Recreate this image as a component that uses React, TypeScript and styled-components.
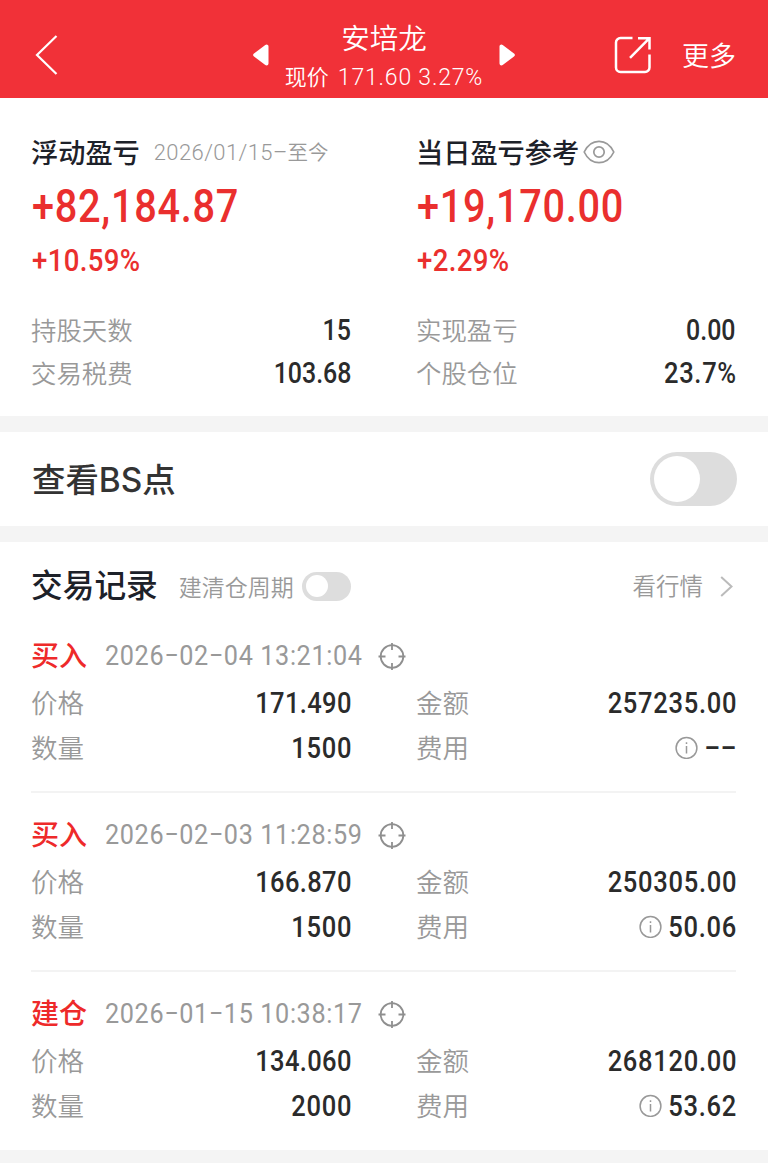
import React from "react";
import styled, { createGlobalStyle } from "styled-components";

const Global = createGlobalStyle`
  * { box-sizing: border-box; }
  body {
    margin: 0;
    background: #fff;
    font-family: Roboto, "Noto Sans CJK SC", sans-serif;
    color: #2b2b2b;
  }
  svg { display: block; flex: none; }
`;

const CJK = `"Noto Sans CJK SC", sans-serif`;

const Page = styled.main`
  width: 768px;
  height: 1163px;
  overflow: hidden;
  display: flex;
  flex-direction: column;
`;

const Header = styled.header`
  height: 98px;
  flex: none;
  background: #f13138;
  color: #fff;
  display: grid;
  grid-template-columns: 1fr 264px 1fr;
  align-items: center;
  padding: 12px 32px 0 34px;
`;

const Switcher = styled.div`
  display: flex;
  align-items: center;
  justify-content: space-between;
  margin: 0 1px 0 -1px;
`;

const StockBlock = styled.div`
  display: flex;
  flex-direction: column;
  align-items: center;
  white-space: nowrap;
`;

const StockName = styled.div`
  padding-top: 1px;
  font: 350 28.5px/38px ${CJK};
`;

const StockPrice = styled.div`
  display: flex;
  gap: 9px;
  font: 350 22px/38px ${CJK};
`;

const Quote = styled.span`
  font: 300 23px/43px Roboto, sans-serif;
  height: 38px;
  letter-spacing: 0.8px;
`;

const Actions = styled.div`
  display: flex;
  align-items: center;
  justify-content: flex-end;
  gap: 31px;
`;

const More = styled.span`
  font: 350 27px/40px ${CJK};
`;

const Summary = styled.section`
  height: 318px;
  flex: none;
  padding: 31px 32px 0 31px;
  display: grid;
  grid-template-columns: 320px 320px;
  justify-content: space-between;
`;

const Column = styled.div`
  display: flex;
  flex-direction: column;
`;

const ColumnTitle = styled.div`
  height: 44px;
  display: flex;
  align-items: center;
  white-space: nowrap;
  font: 500 27.2px/44px ${CJK};
  color: #1d2129;

  svg {
    margin: 2px 0 0 4px;
  }
`;

const Period = styled.span`
  margin-left: 14px;
  display: flex;
  font: 350 20.5px/44px ${CJK};
  color: #999;
`;

const PeriodStart = styled.span`
  height: 44px;
  font: 300 22px/48px Roboto, sans-serif;
  letter-spacing: 0.4px;
`;

const BigNumber = styled.div`
  margin-left: 1px;
  font-size: 47px;
  line-height: 65px;
  font-weight: 500;
  letter-spacing: 0.85px;
  white-space: nowrap;
  color: #ea2f2e;
  transform: scaleX(0.845);
  transform-origin: left;
`;

const Percent = styled.div`
  margin: 0 0 24px 1px;
  font-size: 31px;
  line-height: 46px;
  font-weight: 500;
  letter-spacing: 0.4px;
  color: #ea2f2e;
  transform: scaleX(0.89);
  transform-origin: left;
`;

const Row = styled.div<{ $h: number }>`
  height: ${(p) => p.$h}px;
  display: flex;
  align-items: center;
  justify-content: space-between;
`;

const Label = styled.span<{ $size?: number }>`
  padding-bottom: 2px;
  font: 350 ${(p) => p.$size ?? 25.4}px/40px ${CJK};
  color: #999;
`;

const Value = styled.span<{ $tight?: boolean; $spacing?: number }>`
  display: inline-block;
  font-size: 29px;
  line-height: 40px;
  font-weight: 500;
  letter-spacing: ${(p) => (p.$tight ? 0 : (p.$spacing ?? 0.8))}px;
  margin-right: ${(p) => (p.$tight ? 0 : -0.8)}px;
  transform: scaleX(${(p) => (p.$tight ? 0.86 : 0.88)});
  transform-origin: right;
`;

const Fee = styled.span<{ $w: number }>`
  display: flex;
  align-items: center;
  justify-content: space-between;
  width: ${(p) => p.$w}px;

  ${Value} {
    margin-left: -20px;
  }
`;

const EmptyFee = styled(Value)`
  transform: scaleX(1);
`;

const Gap = styled.div`
  height: 16px;
  flex: none;
  background: #f4f4f4;
`;

const BsBar = styled.section`
  height: 94px;
  flex: none;
  padding: 0 31.5px 0 32px;
  display: flex;
  align-items: center;
  justify-content: space-between;
`;

const BsTitle = styled.span`
  padding-top: 1px;
  font: 500 33.4px/60px Inter, ${CJK};
  color: #333;
`;

const Track = styled.span<{ $w: number; $h: number; $knob: number }>`
  width: ${(p) => p.$w}px;
  height: ${(p) => p.$h}px;
  border-radius: ${(p) => p.$h}px;
  padding-left: 4px;
  background: #ddd;
  display: flex;
  align-items: center;

  &::before {
    content: "";
    width: ${(p) => p.$knob}px;
    height: ${(p) => p.$knob}px;
    border-radius: 50%;
    background: #fff;
  }
`;

const Records = styled.section`
  height: 608px;
  flex: none;
  padding: 0 32px 0 31px;
`;

const RecordsHead = styled.div`
  height: 72px;
  padding-top: 16px;
  display: flex;
  align-items: center;
`;

const RecordsTitle = styled.h2`
  margin: 0 21px 0 0;
  padding-bottom: 6px;
  font: 500 31.7px/54px ${CJK};
  color: #1d2129;
`;

const CycleLabel = styled.span`
  margin-right: 8px;
  padding-bottom: 1px;
  font: 350 23px/40px ${CJK};
  color: #999;
`;

const QuoteLink = styled.span`
  margin-left: auto;
  display: flex;
  align-items: center;
  gap: 17px;
  padding: 0 3px 3px 0;
  font: 350 23.5px/40px ${CJK};
  color: #999;

  svg {
    margin-top: 3px;
  }
`;

const Trade = styled.article`
  height: 179px;
  padding-top: 20px;
  border-bottom: 2px solid #f3f3f3;

  &:last-child {
    border-bottom: 0;
  }
`;

const TradeHead = styled.div`
  height: 44px;
  display: flex;
  align-items: center;
`;

const Kind = styled.span`
  width: 74px;
  padding-bottom: 4px;
  font: 500 28px/40px ${CJK};
  color: #ee2a2a;
`;

const Time = styled.span`
  width: 273px;
  font-size: 28px;
  line-height: 44px;
  letter-spacing: 0.7px;
  white-space: nowrap;
  color: #999;
  transform: scaleX(0.9);
  transform-origin: left;
`;

const TradeGrid = styled.div`
  margin-top: 3px;
  display: grid;
  grid-template-columns: 320px 320px;
  justify-content: space-between;
`;

const BackIcon = () => (
  <svg width="24" height="40" viewBox="0 0 24 40" fill="none" stroke="#fff" strokeWidth="2.2">
    <path d="M22.500 1 3 20 22.500 39" />
  </svg>
);

const Arrow = ({ right }: { right?: boolean }) => (
  <svg width="17" height="24" viewBox="0 0 17 24" fill="#fff" stroke="#fff" strokeWidth="4" strokeLinejoin="round">
    <path d={right ? "M2.500 3.500v17L13.800 12z" : "M14.500 3.500v17L3.200 12z"} />
  </svg>
);

const ShareIcon = () => (
  <svg width="38" height="38" viewBox="0 0 38 38" fill="none" stroke="#fff" strokeWidth="2.5">
    <path d="M19.500 2H7.500A4.500 4.500 0 0 0 3 6.500v25A4.500 4.500 0 0 0 7.500 36h24.500a4.500 4.500 0 0 0 4.500-4.500V18.500" />
    <path d="M25 2.200h11.500V13.500M36 2.700 17 21.800" />
  </svg>
);

const EyeIcon = () => (
  <svg width="32" height="24" viewBox="0 0 32 24" fill="none" stroke="#999" strokeWidth="1.7">
    <path d="M1.200 12C4.500 5 9.800 1.300 16 1.300S27.500 5 30.800 12C27.500 19 22.200 22.700 16 22.700S4.500 19 1.200 12z" />
    <circle cx="16" cy="12" r="5.200" />
  </svg>
);

const TargetIcon = () => (
  <svg width="28" height="28" viewBox="0 0 28 28" fill="none" stroke="#8f8f8f" strokeWidth="1.8">
    <circle cx="14" cy="14.500" r="11.300" />
    <path d="M14 1v7M14 21v7M.5 14.500h7M20.500 14.500h7" />
  </svg>
);

const InfoIcon = () => (
  <svg width="23" height="23" viewBox="0 0 23 23" fill="none" stroke="#999" strokeWidth="1.5">
    <circle cx="11.500" cy="12" r="10.400" />
    <path d="M11.500 10v7.500M11.500 6.300v1.700" />
  </svg>
);

const ChevronIcon = () => (
  <svg width="13" height="21" viewBox="0 0 13 21" fill="none" stroke="#bbb" strokeWidth="2">
    <path d="M1.200 1 11.500 10.500 1.200 20" />
  </svg>
);

const trades = [
  { kind: "买入", time: "2026−02−04 13:21:04", price: "171.490", qty: "1500", amount: "257235.00", fee: "", feeWidth: 61 },
  { kind: "买入", time: "2026−02−03 11:28:59", price: "166.870", qty: "1500", amount: "250305.00", fee: "50.06", feeWidth: 97 },
  { kind: "建仓", time: "2026−01−15 10:38:17", price: "134.060", qty: "2000", amount: "268120.00", fee: "53.62", feeWidth: 97 },
];

export default function App() {
  return (
    <Page>
      <Global />
      <Header>
        <BackIcon />
        <Switcher>
          <Arrow />
          <StockBlock>
            <StockName>安培龙</StockName>
            <StockPrice>
              现价<Quote>171.60 3.27%</Quote>
            </StockPrice>
          </StockBlock>
          <Arrow right />
        </Switcher>
        <Actions>
          <ShareIcon />
          <More>更多</More>
        </Actions>
      </Header>

      <Summary>
        <Column>
          <ColumnTitle>
            浮动盈亏
            <Period>
              <PeriodStart>2026/01/15–</PeriodStart>至今
            </Period>
          </ColumnTitle>
          <BigNumber>+82,184.87</BigNumber>
          <Percent>+10.59%</Percent>
          <Row $h={43}>
            <Label>持股天数</Label>
            <Value $tight>15</Value>
          </Row>
          <Row $h={43}>
            <Label>交易税费</Label>
            <Value $tight>103.68</Value>
          </Row>
        </Column>
        <Column>
          <ColumnTitle>
            当日盈亏参考
            <EyeIcon />
          </ColumnTitle>
          <BigNumber>+19,170.00</BigNumber>
          <Percent>+2.29%</Percent>
          <Row $h={43}>
            <Label>实现盈亏</Label>
            <Value $tight>0.00</Value>
          </Row>
          <Row $h={43}>
            <Label>个股仓位</Label>
            <Value>23.7%</Value>
          </Row>
        </Column>
      </Summary>

      <Gap />
      <BsBar>
        <BsTitle>查看BS点</BsTitle>
        <Track $w={87} $h={54} $knob={46} />
      </BsBar>
      <Gap />

      <Records>
        <RecordsHead>
          <RecordsTitle>交易记录</RecordsTitle>
          <CycleLabel>建清仓周期</CycleLabel>
          <Track $w={49} $h={29} $knob={22} />
          <QuoteLink>
            看行情
            <ChevronIcon />
          </QuoteLink>
        </RecordsHead>
        <div>
          {trades.map((t) => (
            <Trade key={t.time}>
              <TradeHead>
                <Kind>{t.kind}</Kind>
                <Time>{t.time}</Time>
                <TargetIcon />
              </TradeHead>
              <TradeGrid>
                <Row $h={44.5}>
                  <Label $size={26.5}>价格</Label>
                  <Value $spacing={0.4}>{t.price}</Value>
                </Row>
                <Row $h={44.5}>
                  <Label $size={26.5}>金额</Label>
                  <Value>{t.amount}</Value>
                </Row>
                <Row $h={44.5}>
                  <Label $size={26.5}>数量</Label>
                  <Value>{t.qty}</Value>
                </Row>
                <Row $h={44.5}>
                  <Label $size={26.5}>费用</Label>
                  <Fee $w={t.feeWidth}>
                    <InfoIcon />
                    {t.fee ? <Value>{t.fee}</Value> : <EmptyFee $spacing={0}>−−</EmptyFee>}
                  </Fee>
                </Row>
              </TradeGrid>
            </Trade>
          ))}
        </div>
      </Records>
      <Gap />
    </Page>
  );
}
